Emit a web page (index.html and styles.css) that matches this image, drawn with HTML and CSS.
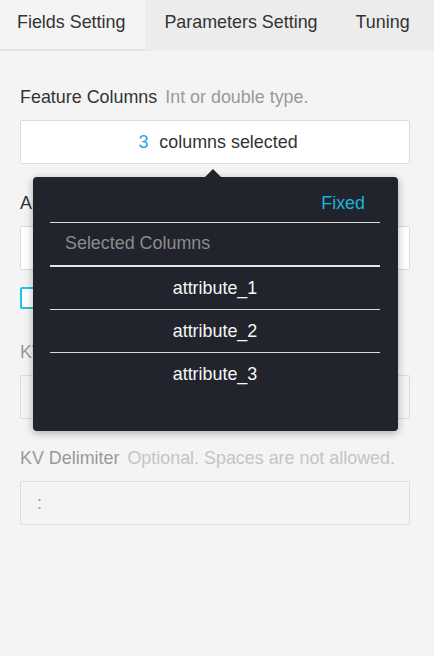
FILE: index.html
```html
<!DOCTYPE html>
<html>
<head>
<meta charset="utf-8">
<link rel="stylesheet" href="styles.css">
</head>
<body>
<div class="tabs">
  <div class="tab active">Fields Setting</div>
  <div class="tab">Parameters Setting</div>
  <div class="tab">Tuning</div>
</div>
<div class="content">
  <div class="field field-first">
    <div class="label"><span class="name">Feature Columns</span><span class="hint">Int or double type.</span></div>
    <div class="input select"><span class="count">3</span><span>columns selected</span></div>
    <div class="popup">
      <div class="caret"></div>
      <div class="popup-head">Fixed</div>
      <div class="popup-title">Selected Columns</div>
      <div class="popup-item">attribute_1</div>
      <div class="popup-item">attribute_2</div>
      <div class="popup-item last">attribute_3</div>
    </div>
  </div>
  <div class="field">
    <div class="label"><span class="name">Append Columns</span><span class="hint">Optional.</span></div>
    <div class="input"></div>
  </div>
  <div class="check-row"><span class="checkbox"></span><span class="check-label">KV format</span></div>
  <div class="field disabled">
    <div class="label"><span class="name">KV Pair Delimiter</span><span class="hint">Optional.</span></div>
    <div class="input"></div>
  </div>
  <div class="field disabled">
    <div class="label"><span class="name">KV Delimiter</span><span class="hint">Optional. Spaces are not allowed.</span></div>
    <div class="input"><span class="value">:</span></div>
  </div>
</div>
</body>
</html>
```
FILE: styles.css
```css
* { box-sizing: border-box; }
html, body {
  margin: 0;
  padding: 0;
  background: #f4f4f4;
  font-family: "Liberation Sans", Arial, sans-serif;
  font-size: 17.9px;
  color: #333;
}
.tabs {
  display: flex;
  height: 51px;
  background: #ececec;
}
.tab {
  padding: 10px 19px 0 19px;
  line-height: 24px;
  color: #333;
  white-space: nowrap;
}
.tab.active {
  background: #f4f4f4;
  box-shadow: inset 0 -2px 0 #e2e2e2;
  padding-left: 17px;
  padding-right: 20px;
}
.content {
  padding: 35px 24px 0 20px;
}
.field {
  margin-bottom: 28px;
}
.field-first {
  position: relative;
}
.label {
  display: flex;
  gap: 8px;
  line-height: 22px;
  margin-bottom: 12px;
  white-space: nowrap;
}
.hint { color: #999; }
.input {
  height: 44px;
  border: 1px solid #dcdcdc;
  border-radius: 2px;
  background: #fff;
  display: flex;
  align-items: center;
  padding: 0 16px;
}
.select {
  justify-content: center;
  padding-left: 22px;
}
.count {
  color: #2b9de9;
  margin-right: 11px;
}
.check-row {
  display: flex;
  align-items: center;
  gap: 10px;
  margin-top: -11px;
  margin-bottom: 32px;
  height: 22px;
}
.checkbox {
  width: 22px;
  height: 22px;
  border: 2px solid #1ec4e8;
  border-radius: 2px;
  background: #fff;
}
.disabled .name { color: #999; }
.disabled .hint { color: #c4c4c4; }
.disabled .input { background: #f4f4f4; }
.value { color: #999; }
.popup {
  position: absolute;
  left: 13px;
  top: 91px;
  width: 365px;
  height: 254px;
  background: #21242c;
  border-radius: 4px;
  box-shadow: 0 2px 8px rgba(0, 0, 0, 0.3);
  padding: 0 18px 0 17px;
  z-index: 10;
}
.caret {
  position: absolute;
  top: -8px;
  left: 172px;
  width: 0;
  height: 0;
  border-left: 8px solid transparent;
  border-right: 8px solid transparent;
  border-bottom: 8px solid #21242c;
}
.popup-head {
  text-align: right;
  color: #1ab4d8;
  line-height: 22px;
  padding: 15px 15px 8px 0;
  border-bottom: 1px solid #dadada;
}
.popup-title {
  color: #8c8c8c;
  line-height: 22px;
  padding: 9px 15px 11px 15px;
  border-bottom: 2px solid #e6e6e6;
}
.popup-item {
  color: #f6f6f6;
  text-align: center;
  line-height: 42px;
  border-bottom: 1px solid #dadada;
}
.popup-item.last { border-bottom: none; }
```
